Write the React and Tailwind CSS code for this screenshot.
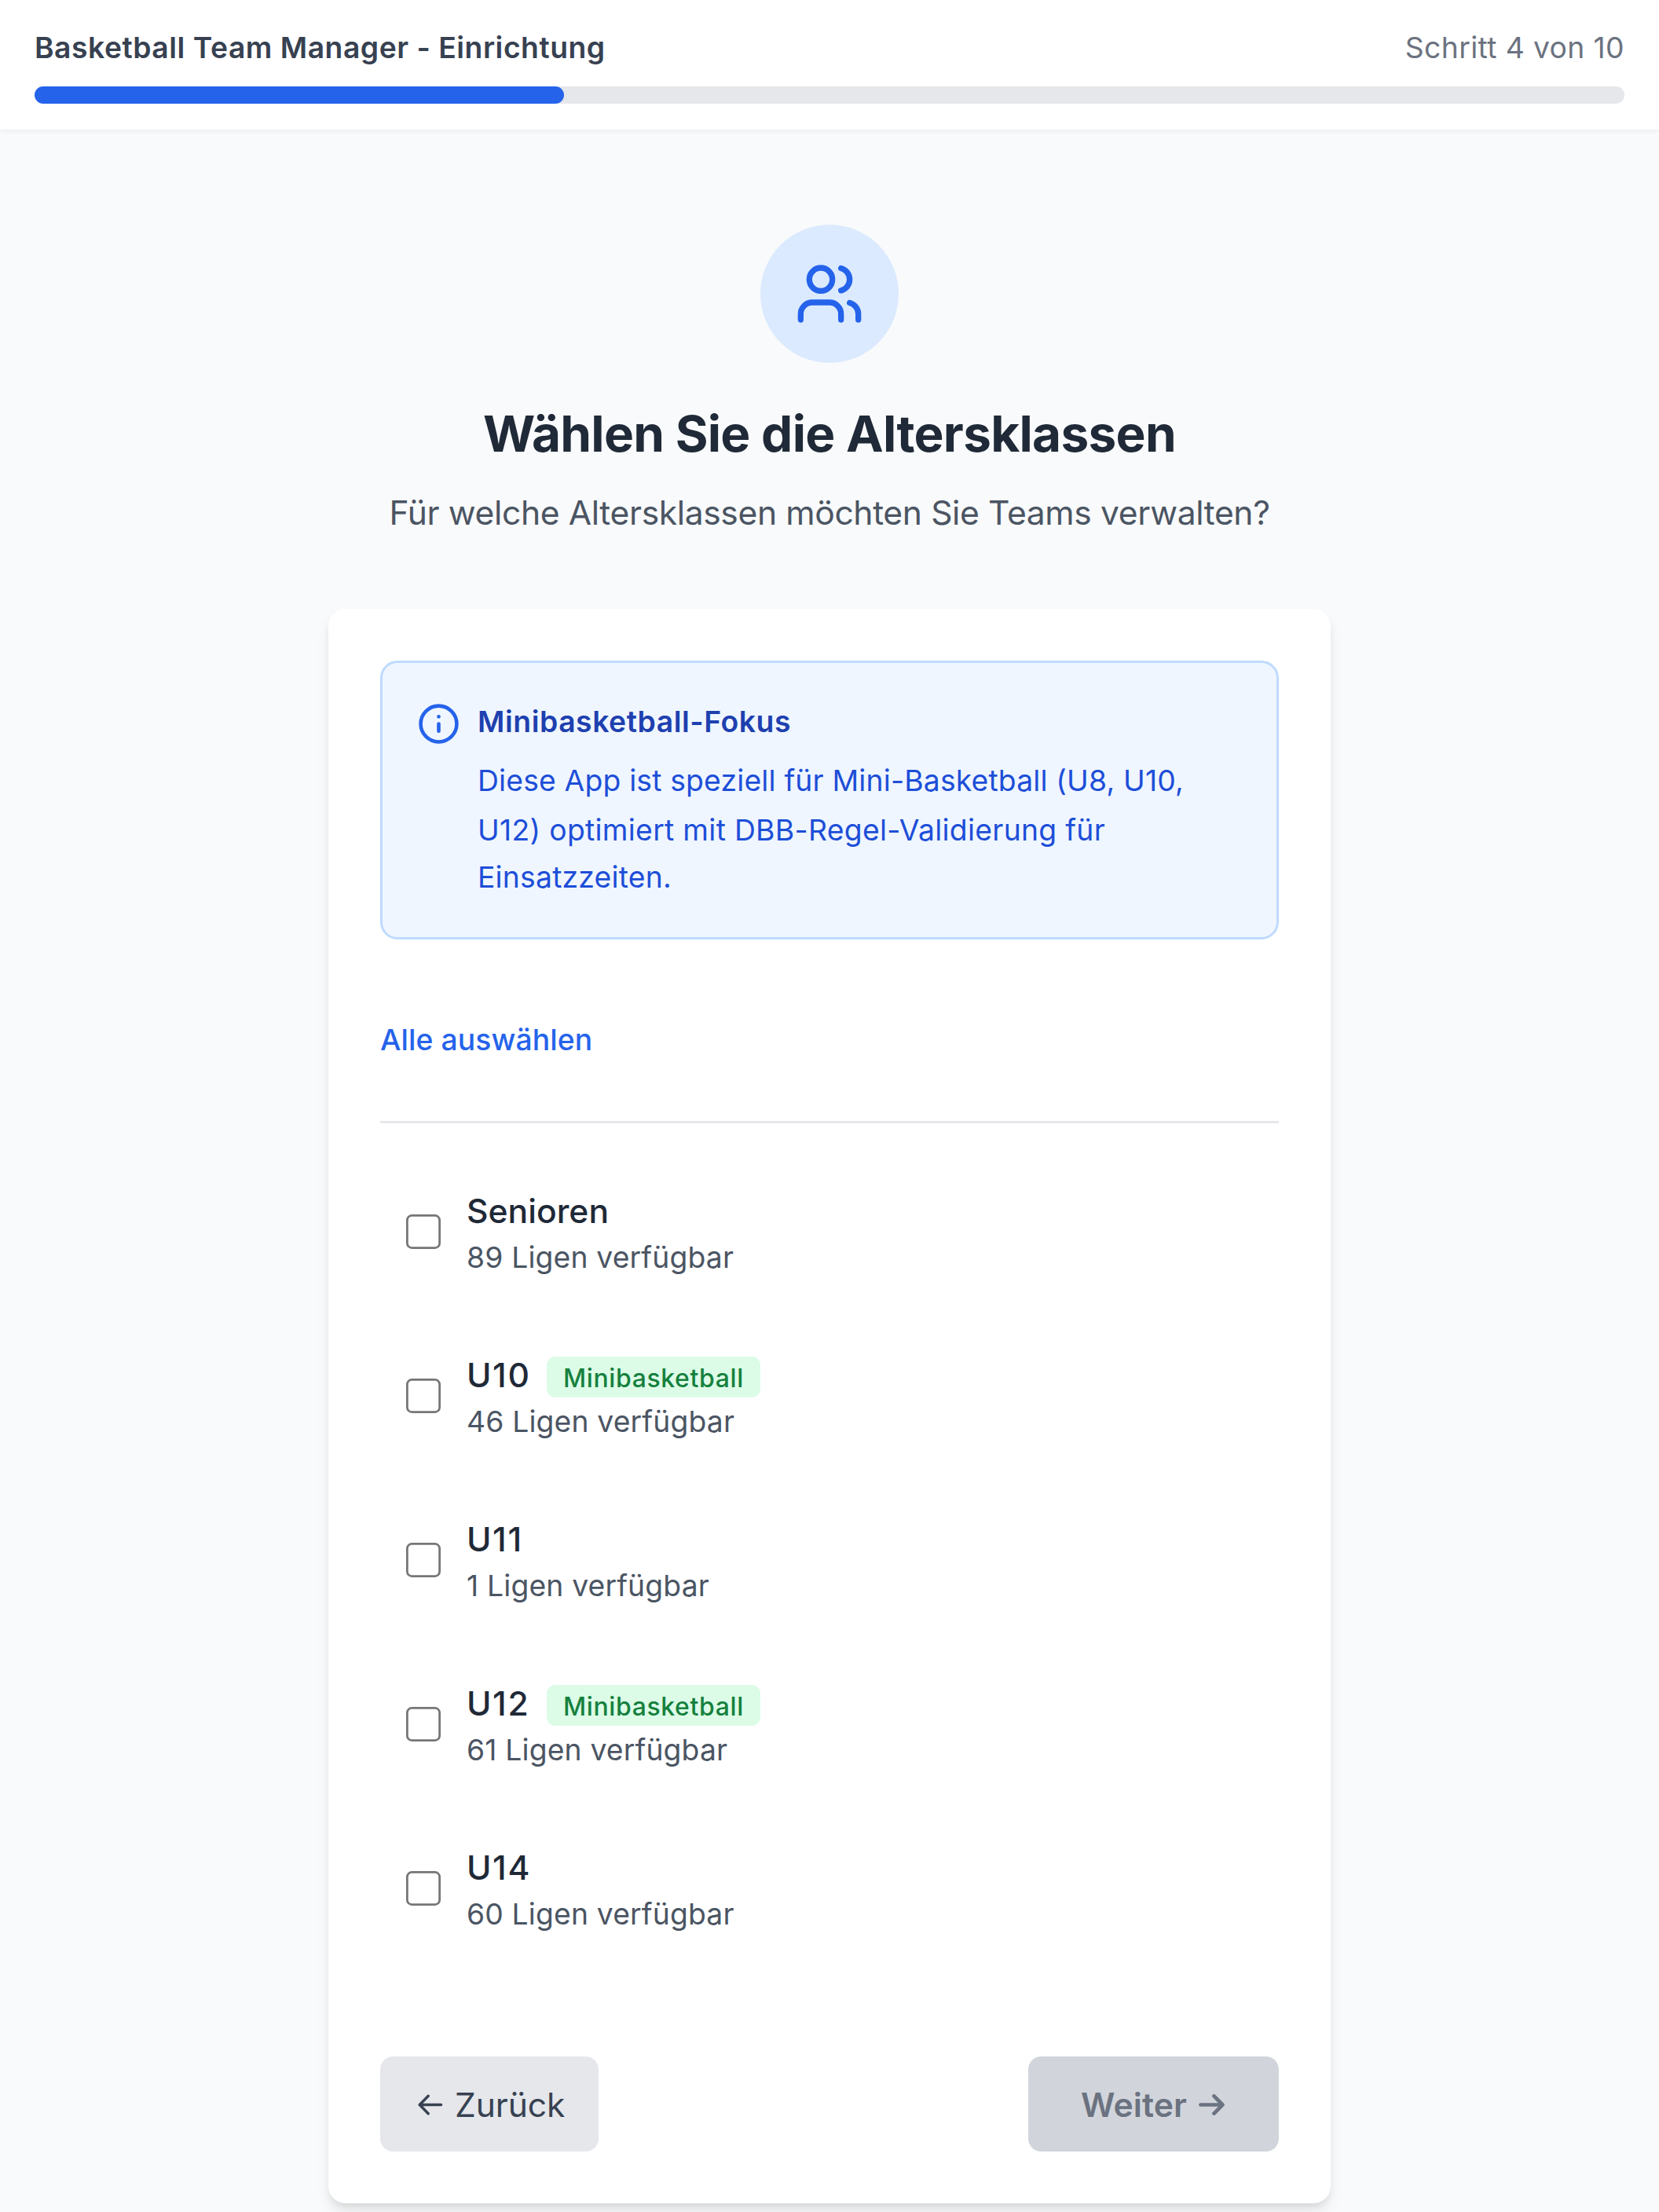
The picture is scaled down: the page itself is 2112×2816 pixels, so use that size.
import { Info, Users } from "lucide-react";

const ageGroups = [
  { name: "Senioren", leagues: 89 },
  { name: "U10", leagues: 46, mini: true },
  { name: "U11", leagues: 1 },
  { name: "U12", leagues: 61, mini: true },
  { name: "U14", leagues: 60 },
];

function Header({ step, total, percent }) {
  return (
    <header className="bg-white px-11 pt-[33px] pb-[33px] shadow-[0_2.75px_5.5px_rgba(0,0,0,0.05)]">
      <div className="mb-[22px] flex items-center justify-between text-[37.27px] leading-[55px]">
        <span className="font-semibold tracking-[0.523px] text-[#374151]">
          Basketball Team Manager - Einrichtung
        </span>
        <span className="tracking-[0.38px] text-[#6b7280]">
          Schritt {step} von {total}
        </span>
      </div>
      <div className="h-[22px] rounded-full bg-[#e5e7eb]">
        <div className="h-full rounded-full bg-[#2563eb]" style={{ width: `${percent}%` }} />
      </div>
    </header>
  );
}

function InfoBox() {
  return (
    <div className="flex h-[355px] gap-[22px] rounded-[22px] border-[3px] border-[#bfdbfe] bg-[#eff6ff] px-11 pt-11">
      <Info className="mt-1.5 size-[55px] shrink-0 text-[#2563eb]" strokeWidth={2} />
      <div className="text-[37.27px] whitespace-nowrap">
        <p className="mt-[3px] leading-[55px] font-semibold tracking-[0.57px] text-[#1e40af]">
          Minibasketball-Fokus
        </p>
        <p className="mt-[17px] leading-[62px] text-[#1d4ed8]">
          <span className="block h-[63px] tracking-[0.18px]">
            Diese App ist speziell für Mini-Basketball (U8, U10,
          </span>
          <span className="block h-[60px] tracking-[0.307px]">
            U12) optimiert mit DBB-Regel-Validierung für
          </span>
          <span className="block tracking-[0.22px]">Einsatzzeiten.</span>
        </p>
      </div>
    </div>
  );
}

function Checkbox() {
  return (
    <svg className="size-11 shrink-0" viewBox="0 0 44 44" fill="white" role="checkbox" aria-checked="false">
      <rect x="1.375" y="1.375" width="41.25" height="41.25" rx="6" stroke="#767676" strokeWidth="2.75" />
    </svg>
  );
}

function AgeGroup({ name, leagues, mini }) {
  const nameStyle = name.startsWith("U") ? "w-[80px] tracking-[1.6px]" : "tracking-[0.023px]";
  return (
    <label className="flex items-center gap-[33px] p-[33px]">
      <Checkbox />
      <div className="h-[121px]">
        <div className="flex h-[69px] items-start gap-[22px]">
          <span className={`shrink-0 text-[42.59px] leading-[69px] font-medium text-[#1f2937] ${nameStyle}`}>
            {name}
          </span>
          {mini && (
            <span className="mt-[11px] h-[52px] w-[272px] rounded-[11px] bg-[#dcfce7] pl-[21px] text-[31.94px] leading-[55px] font-medium tracking-[0.64px] text-[#15803d]">
              Minibasketball
            </span>
          )}
        </div>
        <p className="text-[37.27px] leading-[49px] tracking-[0.163px] text-[#4b5563]">
          {leagues} Ligen verfügbar
        </p>
      </div>
    </label>
  );
}

function ArrowLeft() {
  return (
    <svg className="mt-[2px] h-[27px] w-8 shrink-0" viewBox="0 0 32 27" fill="none" stroke="currentColor" strokeWidth="3.4" strokeLinecap="round" strokeLinejoin="round">
      <path d="M13.2 2.2 2.2 13.5 13.2 24.8M2.2 13.5H29.6" />
    </svg>
  );
}

function ArrowRight() {
  return (
    <svg className="mt-[2px] h-[27px] w-[33px] shrink-0" viewBox="0 0 33 27" fill="none" stroke="currentColor" strokeWidth="4.7" strokeLinecap="round" strokeLinejoin="round">
      <path d="M19.5 2.4 30.4 13.5 19.5 24.6M30.4 13.5H2.4" />
    </svg>
  );
}

export default function App() {
  return (
    <div className="h-[2816px] overflow-hidden bg-[#f9fafb] font-['Inter',sans-serif]">
      <Header step={4} total={10} percent={33.3} />
      <main className="mx-auto w-[1276px] pt-[121px]">
        <div className="flex flex-col items-center whitespace-nowrap">
          <div className="flex size-[176px] items-center justify-center rounded-full bg-[#dbeafe]">
            <Users className="size-[88px] text-[#2563eb]" strokeWidth={2} />
          </div>
          <h1 className="mt-[46px] text-[63.89px] leading-[88px] font-bold tracking-[-0.72px] text-[#1f2937]">
            Wählen Sie die Altersklassen
          </h1>
          <p className="mt-[24px] text-[42.59px] leading-[66px] tracking-[-0.367px] text-[#4b5563]">
            Für welche Altersklassen möchten Sie Teams verwalten?
          </p>
        </div>
        <section className="mt-[89px] h-[2030px] rounded-[22px] bg-white p-[66px] shadow-[0_11px_16.5px_-2.75px_rgba(0,0,0,0.1),0_5.5px_11px_-5.5px_rgba(0,0,0,0.1)]">
          <InfoBox />
          <button className="mt-[100px] block text-[37.27px] leading-[55px] font-medium tracking-[0.1px] text-[#2563eb]">
            Alle auswählen
          </button>
          <div className="mt-[76px] h-[3px] bg-[#e5e7eb]" />
          <div className="mt-11 flex flex-col gap-[22px]">
            {ageGroups.map((group) => (
              <AgeGroup key={group.name} {...group} />
            ))}
          </div>
          <div className="mt-[121px] flex justify-between text-[42.59px]">
            <button className="flex h-[121px] w-[278px] items-center gap-[15px] rounded-[16.5px] bg-[#e5e7eb] pl-12 text-[#374151]">
              <ArrowLeft />
              <span className="mt-[2px] tracking-[-0.097px]">Zurück</span>
            </button>
            <button className="flex h-[121px] w-[319px] items-center gap-[15px] rounded-[16.5px] bg-[#d1d5db] pl-[67px] font-semibold text-[#6b7280]">
              <span className="mt-[2px] tracking-[0.12px]">Weiter</span>
              <ArrowRight />
            </button>
          </div>
        </section>
      </main>
    </div>
  );
}
